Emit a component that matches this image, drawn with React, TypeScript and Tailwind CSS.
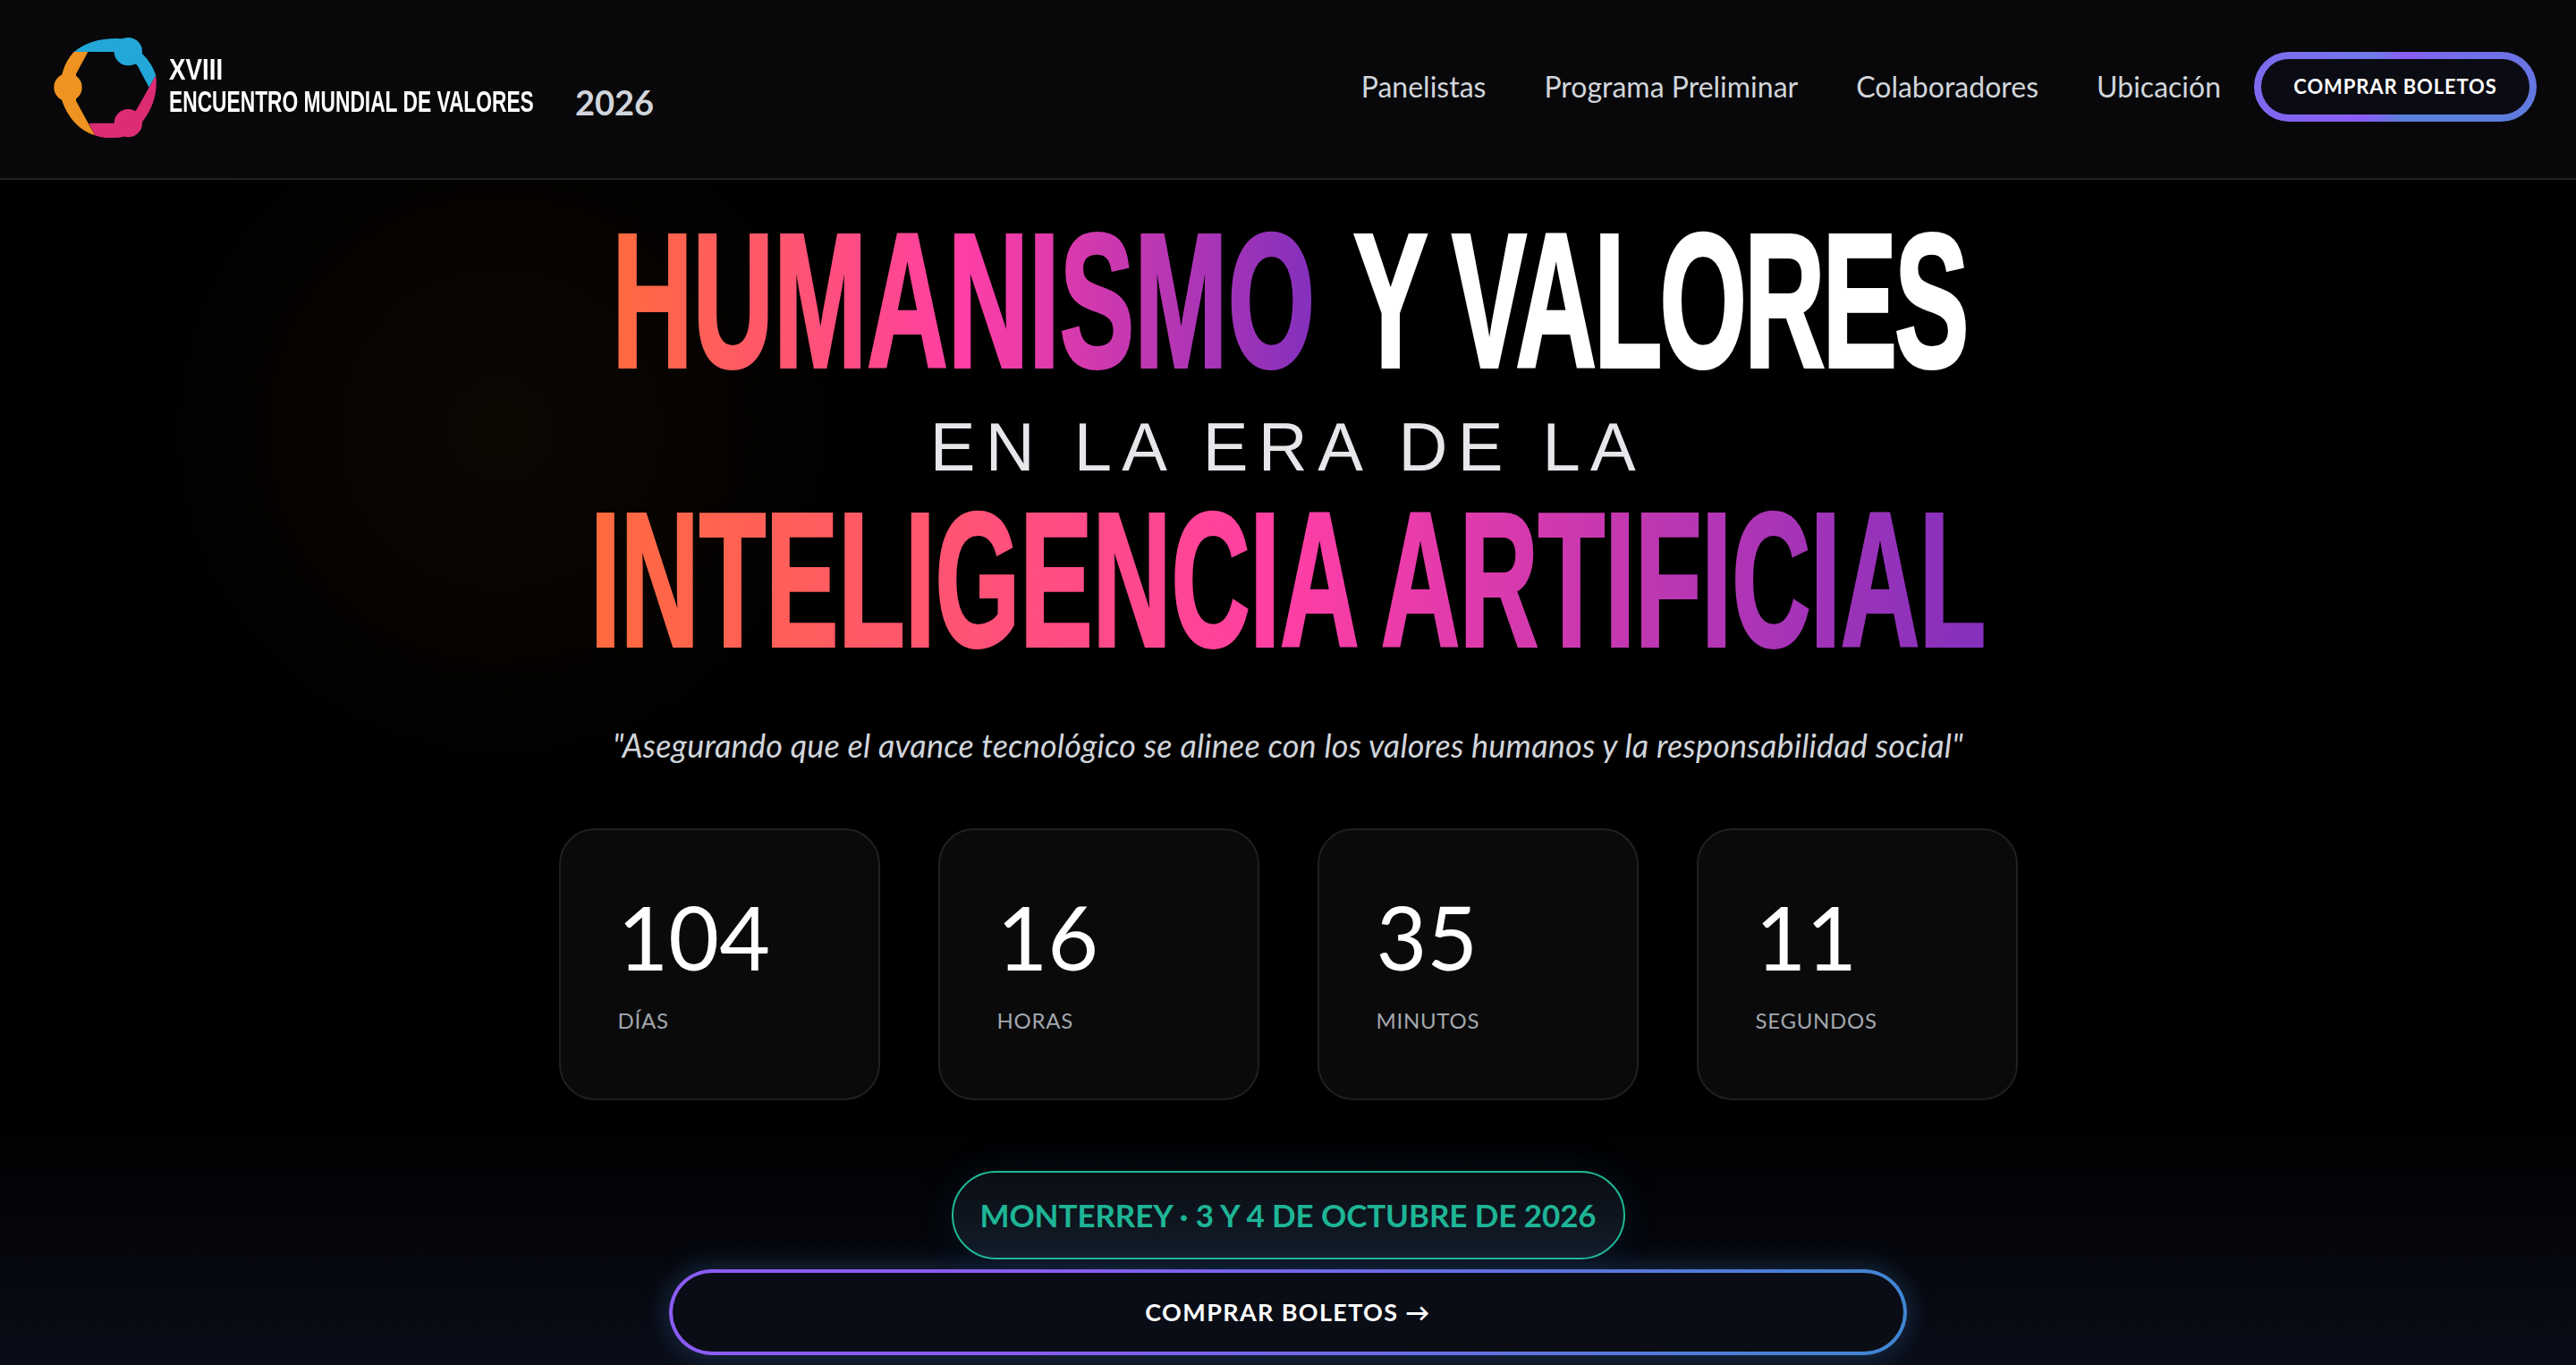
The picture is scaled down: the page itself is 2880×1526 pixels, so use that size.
import React from 'react';

const countdown = [
  { value: '104', label: 'DÍAS' },
  { value: '16', label: 'HORAS' },
  { value: '35', label: 'MINUTOS' },
  { value: '11', label: 'SEGUNDOS' },
];

const links = ['Panelistas', 'Programa Preliminar', 'Colaboradores', 'Ubicación'];

const gradientText =
  'bg-[linear-gradient(90deg,#ff6b3d_0%,#ff3ea5_50%,#8330bd_100%)] bg-clip-text text-transparent';

const Logo = () => (
  <svg viewBox="60 68 348 336" className="w-[116px] h-[112px] shrink-0">
    <path fill="#23a6d8" d="M128 116Q190 66 290 72L360 125Q390 155 403 195L380 235L340 160L265 116Z" />
    <circle fill="#23a6d8" cx="310" cy="115" r="47" />
    <path fill="#dd2c74" d="M403 195Q412 280 358 350L290 402Q235 410 198 396L178 355H265L335 315L380 235Z" />
    <circle fill="#dd2c74" cx="310" cy="355" r="47" />
    <path fill="#ee9322" d="M128 116H175L135 190V280L198 396Q120 370 88 280V190Q100 145 128 116Z" />
    <circle fill="#ee9322" cx="108" cy="235" r="47" />
  </svg>
);

const App = () => {
  return (
    <div className="relative w-full h-[1526px] overflow-hidden font-['Lato',sans-serif] text-white [background:radial-gradient(circle_at_560px_480px,#0d0702_0%,transparent_420px),linear-gradient(180deg,#000000_82%,#0a0d18_100%)]">
      <header className="h-[201px] flex items-center justify-between pl-[60px] pr-[44px] pb-[6px] bg-[#08080a] border-b-2 border-[#222226]">
        <div className="flex items-center mt-[2px]">
          <Logo />
          <div className="ml-[13px] mb-[3px] font-['Liberation_Sans',sans-serif] font-bold text-white w-[454px]">
            <div className="text-[33px] leading-[36px] origin-left scale-x-[0.84]">XVIII</div>
            <div className="text-[33px] leading-[36px] whitespace-nowrap origin-left scale-x-[0.69]">
              ENCUENTRO MUNDIAL DE VALORES
            </div>
          </div>
          <div className="text-[38px] leading-[48px] font-bold text-[#d1d5db] mt-[32px]">2026</div>
        </div>
        <nav className="flex items-center gap-[37px]">
          <div className="flex items-center gap-[65px]">
            {links.map((l) => (
              <a key={l} className="text-[32px] text-[#d1d5db] whitespace-nowrap">
                {l}
              </a>
            ))}
          </div>
          <button className="h-[78px] w-[316px] rounded-[39px] border-[8px] border-transparent text-[22px] font-bold tracking-[0.04em] [background:linear-gradient(#0b0b14,#0b0b14)_padding-box,conic-gradient(from_20deg,#8b5cf6_0deg,#5b7fdc_90deg,#5b7fdc_150deg,#8b5cf6_210deg,#6f7ae8_300deg,#8b5cf6_360deg)_border-box]">
            COMPRAR BOLETOS
          </button>
        </nav>
      </header>

      <main className="flex flex-col items-center">
        <h1 className="mt-[40px] pl-[2px] font-['Liberation_Sans',sans-serif] font-bold text-[214px] leading-[190px] whitespace-nowrap flex justify-center [-webkit-text-stroke:4px_currentColor]">
          <span className="inline-block scale-x-[0.585]">
            <span className={gradientText}>HUMANISMO</span>{' '}
            <span className="ml-[14px] tracking-[-5px]">Y VALORES</span>
          </span>
        </h1>
        <div className="mt-[24px] font-['Liberation_Sans',sans-serif] text-[76px] leading-[90px] tracking-[0.15em] text-[#e5e7eb] whitespace-nowrap">
          EN LA ERA DE LA
        </div>
        <div className="mt-[8px] font-['Liberation_Sans',sans-serif] font-bold text-[214px] leading-[190px] whitespace-nowrap flex justify-center [-webkit-text-stroke:4px_currentColor]">
          <span className={`inline-block scale-x-[0.569] ${gradientText}`}>INTELIGENCIA ARTIFICIAL</span>
        </div>

        <p className="mt-[68px] text-[36px] leading-[44px] tracking-[0.2px] italic text-[#d1d5db]">
          "Asegurando que el avance tecnológico se alinee con los valores humanos y la responsabilidad social"
        </p>

        <div className="mt-[71px] grid grid-cols-4 gap-[65px]">
          {countdown.map((c) => (
            <div
              key={c.label}
              className="w-[359px] h-[304px] rounded-[40px] border-2 border-[#1f2023] bg-[#0a0a0b] pl-[64px] pt-[61px]"
            >
              <div className="text-[98px] leading-[116px] text-white">{c.value}</div>
              <div className="mt-[21px] text-[24px] leading-[30px] tracking-[0.03em] text-[#a3a7ad]">{c.label}</div>
            </div>
          ))}
        </div>

        <div className="mt-[79px] w-[753px] h-[99px] rounded-[50px] border-2 border-[#1fb896] bg-[linear-gradient(180deg,#0a0d14,#121c28)] flex items-center justify-center text-[35px] font-bold tracking-[-0.1px] text-[#1eb596] shadow-[0_0_40px_rgba(30,80,120,0.18)] whitespace-nowrap">
          MONTERREY · 3 Y 4 DE OCTUBRE DE 2026
        </div>
        <button className="mt-[11px] w-[1384px] h-[96px] rounded-[48px] border-[4px] border-transparent flex items-center justify-center text-[27px] font-bold tracking-[0.05em] [background:linear-gradient(#0a0d16,#0a0d16)_padding-box,linear-gradient(100deg,#8b5cf6_0%,#8b5cf6_30%,#3f86d0_100%)_border-box] shadow-[0_0_30px_rgba(60,130,200,0.35)]">
          COMPRAR BOLETOS →
        </button>
      </main>
    </div>
  );
};

export default App;
